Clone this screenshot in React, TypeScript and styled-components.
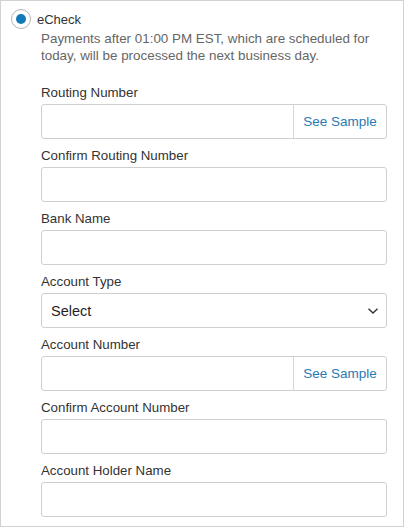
import React from 'react';
import styled, { createGlobalStyle } from 'styled-components';

const GlobalStyle = createGlobalStyle`
  html, body {
    margin: 0;
    padding: 0;
    background: #ffffff;
  }
  body {
    font-family: "Liberation Sans", Arial, sans-serif;
    -webkit-font-smoothing: antialiased;
  }
`;

interface Field {
  label: string;
  kind: 'text' | 'sample' | 'select';
}

const fields: Field[] = [
  { label: 'Routing Number', kind: 'sample' },
  { label: 'Confirm Routing Number', kind: 'text' },
  { label: 'Bank Name', kind: 'text' },
  { label: 'Account Type', kind: 'select' },
  { label: 'Account Number', kind: 'sample' },
  { label: 'Confirm Account Number', kind: 'text' },
  { label: 'Account Holder Name', kind: 'text' },
];

const App: React.FC = () => {
  return (
    <>
      <GlobalStyle />
      <Panel>
        <OptionRow>
          <Radio>
            <RadioDot />
          </Radio>
          <OptionTitle>eCheck</OptionTitle>
        </OptionRow>
        <Body>
          <Notice>
            Payments after 01:00 PM EST, which are scheduled for
            <br />
            today, will be processed the next business day.
          </Notice>
          <Fields>
            {fields.map((f) => (
              <FieldGroup key={f.label}>
                <Label>{f.label}</Label>
                {f.kind === 'select' ? (
                  <SelectBox>
                    <span>Select</span>
                    <svg width="12" height="8" viewBox="0 0 12 8">
                      <path d="M1.5 1.8 L6 6 L10.5 1.8" fill="none" stroke="#333" strokeWidth="1.4" />
                    </svg>
                  </SelectBox>
                ) : (
                  <InputBox>
                    <TextInput type="text" />
                    {f.kind === 'sample' && <SampleLink>See Sample</SampleLink>}
                  </InputBox>
                )}
              </FieldGroup>
            ))}
          </Fields>
        </Body>
      </Panel>
    </>
  );
};

const Panel = styled.div`
  box-sizing: border-box;
  width: 404px;
  height: 527px;
  border: 1px solid #d2d2d2;
  background: #fff;
  padding: 8px 16px 0 10px;
`;

const OptionRow = styled.div`
  display: flex;
  align-items: center;
  gap: 6px;
  height: 20px;
`;

const Radio = styled.div`
  box-sizing: border-box;
  width: 20px;
  height: 20px;
  border-radius: 50%;
  border: 1px solid #b3b3b3;
  background: #fff;
  display: flex;
  align-items: center;
  justify-content: center;
`;

const RadioDot = styled.div`
  width: 10px;
  height: 10px;
  border-radius: 50%;
  background: #1479b8;
`;

const OptionTitle = styled.div`
  font-size: 13px;
  color: #333;
`;

const Body = styled.div`
  padding-left: 30px;
`;

const Notice = styled.div`
  margin-top: 1px;
  font-size: 13.4px;
  line-height: 17px;
  color: #666;
`;

const Fields = styled.div`
  margin-top: 20px;
  display: flex;
  flex-direction: column;
`;

const FieldGroup = styled.div`
  display: flex;
  flex-direction: column;
  margin-bottom: 8px;
`;

const Label = styled.div`
  font-size: 13.3px;
  line-height: 17px;
  color: #333;
  margin-bottom: 3px;
`;

const InputBox = styled.div`
  box-sizing: border-box;
  height: 35px;
  display: flex;
  border: 1px solid #cfcfcf;
  border-radius: 3px;
  background: #fff;
  overflow: hidden;
`;

const TextInput = styled.input`
  flex: 1;
  min-width: 0;
  border: none;
  outline: none;
  padding: 0 10px;
  font-size: 14px;
  font-family: inherit;
  background: transparent;
`;

const SampleLink = styled.div`
  width: 92px;
  border-left: 1px solid #d6d6d6;
  display: flex;
  align-items: center;
  justify-content: center;
  font-size: 13.5px;
  color: #2a7ab4;
`;

const SelectBox = styled.div`
  box-sizing: border-box;
  height: 35px;
  display: flex;
  align-items: center;
  justify-content: space-between;
  padding: 0 7px 0 9px;
  border: 1px solid #cfcfcf;
  border-radius: 3px;
  background: #fff;
  font-size: 14.5px;
  color: #1f1f1f;
`;

export default App;
